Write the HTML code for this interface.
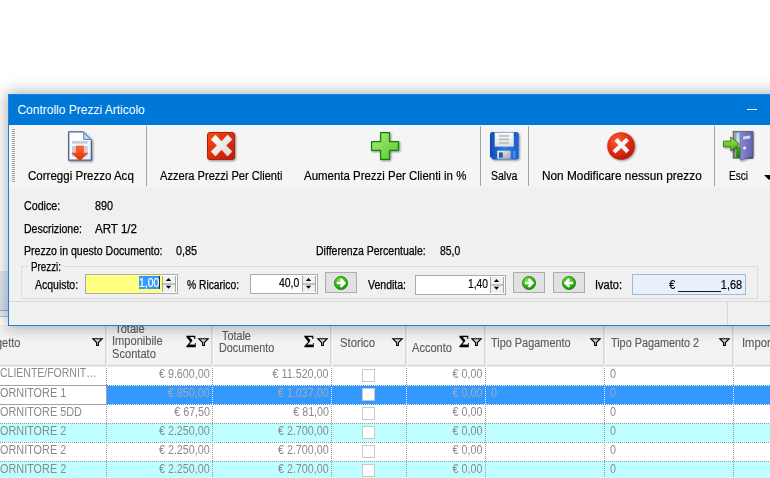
<!DOCTYPE html>
<html><head><meta charset="utf-8"><title>Controllo Prezzi Articolo</title>
<style>
html,body{margin:0;padding:0;}
body{width:770px;height:478px;overflow:hidden;background:#fff;position:relative;font-family:"Liberation Sans",sans-serif;font-size:11px;color:#000;}
.abs,.abs *{position:absolute;white-space:nowrap;}
svg{position:absolute;overflow:visible;}
#bgl1{left:0;top:271px;width:8px;height:39px;background:linear-gradient(#e2e9f5,#d9e3f2);}
#bgl2{left:0;top:310px;width:8px;height:1px;background:#8fb2e4;}
#bgl3{left:0;top:311px;width:8px;height:5px;background:#e9eff8;}
#bgl4{left:0;top:316px;width:8px;height:1px;background:#b9c3d1;}
#grid{left:0;top:325px;width:770px;height:153px;background:#fff;}
.hdr{top:0;left:0;width:770px;height:42px;background:linear-gradient(#f3f3f3 0,#f3f3f3 39px,#ececec 39px,#ececec 40px,#d4d4d4 40px,#d4d4d4 41px,#e6eded 41px,#e6eded 42px);}
.hsep{top:0;width:3px;height:41px;background:linear-gradient(90deg,#dcdcdc 0,#d2d2d2 34%,#fbfbfb 67%,#f6f6f6 100%);}
.ht{color:#5c5c5c;font-size:12px;line-height:12.4px;transform-origin:0 0;-webkit-text-stroke:.15px #5c5c5c;}
.row{left:0;width:770px;height:19px;}
.cell{top:1px;height:14px;line-height:14px;color:#8a8a8a;font-size:12px;transform-origin:0 0;transform:scaleX(.895);}
.cell.rt{transform-origin:100% 0;}
.sel .cell{color:#9daabc;}
.sel .cell.c0{color:#878787;}
.vl{top:42px;width:1px;height:112px;background:repeating-linear-gradient(transparent 0,transparent 1px,#979797 1px,#979797 2px);}
.hl{left:0;width:770px;height:1px;background:repeating-linear-gradient(90deg,#9c9c9c 0,#9c9c9c 1px,transparent 1px,transparent 2px);}
.cb{width:11px;height:11px;border:1px solid #c8c8c8;background:#fff;}
#win{left:8px;top:94px;width:780px;height:232px;background:#f0f0f0;border:1px solid #1a80d9;box-sizing:border-box;box-shadow:0 0 15px 1px rgba(0,0,0,.33);}
#title{left:0;top:0;width:780px;height:30px;background:#0078d7;}
#title span{left:8.4px;top:8px;color:#fff;font-size:12px;line-height:14px;}
#tb{left:0;top:30px;width:780px;height:62px;background:#f5f5f5;}
.tsep{top:1px;width:1px;height:60px;background:#a5a5a5;}
.tl{top:44px;font-size:12px;line-height:14px;transform-origin:0 0;-webkit-text-stroke:.2px #000;}
.lbl{font-size:12px;line-height:14px;transform-origin:0 0;-webkit-text-stroke:.25px #000;}
.num{height:18px;border:1px solid #a9abb1;background:#fff;}
.num span{font-size:12px;line-height:14px;top:1px;-webkit-text-stroke:.2px currentColor;transform-origin:100% 0;transform:scaleX(.91);}
.sp{top:1px;width:14px;height:16px;}
.btn{width:30px;height:19px;border:1px solid #adadad;background:#e1e1e1;}
</style></head><body>
<div class="abs" id="bgl1"></div><div class="abs" id="bgl2"></div><div class="abs" id="bgl3"></div><div class="abs" id="bgl4"></div>
<div class="abs" id="grid">
<div class="hdr"></div>
<div class="hsep" style="left:105px"></div><div class="hsep" style="left:211px"></div><div class="hsep" style="left:330px"></div><div class="hsep" style="left:405px"></div><div class="hsep" style="left:484px"></div><div class="hsep" style="left:603px"></div><div class="hsep" style="left:732px"></div>
<span class="ht" style="left:-4.5px;top:12px;transform:scaleX(.915)">getto</span><svg style="left:92px;top:13px" width="11" height="9" viewBox="0 0 11 9"><path d="M0.8 0.7H10.2L6.4 4.5V7.5H4.6V4.5Z" fill="#d2d2d2" stroke="#000" stroke-width="1.1" stroke-linejoin="miter"/></svg><span class="ht" style="left:112.4px;top:-2px;transform:scaleX(0.9252)">&nbsp;Totale<br>Imponibile<br>Scontato</span><span class="abs" style="left:185.5px;top:8px;font-family:'Liberation Serif',serif;font-weight:bold;font-size:17.5px;line-height:17px;color:#000;transform-origin:0 0;transform:scaleX(.92);-webkit-text-stroke:.3px #000">Σ</span><svg style="left:198px;top:13px" width="11" height="9" viewBox="0 0 11 9"><path d="M0.8 0.7H10.2L6.4 4.5V7.5H4.6V4.5Z" fill="#d2d2d2" stroke="#000" stroke-width="1.1" stroke-linejoin="miter"/></svg><span class="ht" style="left:218.5px;top:5px;transform:scaleX(0.8996)">&nbsp;Totale<br>Documento</span><span class="abs" style="left:303.5px;top:8px;font-family:'Liberation Serif',serif;font-weight:bold;font-size:17.5px;line-height:17px;color:#000;transform-origin:0 0;transform:scaleX(.92);-webkit-text-stroke:.3px #000">Σ</span><svg style="left:317px;top:13px" width="11" height="9" viewBox="0 0 11 9"><path d="M0.8 0.7H10.2L6.4 4.5V7.5H4.6V4.5Z" fill="#d2d2d2" stroke="#000" stroke-width="1.1" stroke-linejoin="miter"/></svg><span class="ht" style="left:340px;top:12px;transform:scaleX(0.9372)">Storico</span><svg style="left:392px;top:13px" width="11" height="9" viewBox="0 0 11 9"><path d="M0.8 0.7H10.2L6.4 4.5V7.5H4.6V4.5Z" fill="#d2d2d2" stroke="#000" stroke-width="1.1" stroke-linejoin="miter"/></svg><span class="ht" style="left:412px;top:17px;transform:scaleX(0.9226)">Acconto</span><span class="abs" style="left:458.5px;top:8px;font-family:'Liberation Serif',serif;font-weight:bold;font-size:17.5px;line-height:17px;color:#000;transform-origin:0 0;transform:scaleX(.92);-webkit-text-stroke:.3px #000">Σ</span><svg style="left:471px;top:13px" width="11" height="9" viewBox="0 0 11 9"><path d="M0.8 0.7H10.2L6.4 4.5V7.5H4.6V4.5Z" fill="#d2d2d2" stroke="#000" stroke-width="1.1" stroke-linejoin="miter"/></svg><span class="ht" style="left:491.4px;top:12px;transform:scaleX(0.9086)">Tipo Pagamento</span><svg style="left:590px;top:13px" width="11" height="9" viewBox="0 0 11 9"><path d="M0.8 0.7H10.2L6.4 4.5V7.5H4.6V4.5Z" fill="#d2d2d2" stroke="#000" stroke-width="1.1" stroke-linejoin="miter"/></svg><span class="ht" style="left:610.5px;top:12px;transform:scaleX(0.9026)">Tipo Pagamento 2</span><svg style="left:719px;top:13px" width="11" height="9" viewBox="0 0 11 9"><path d="M0.8 0.7H10.2L6.4 4.5V7.5H4.6V4.5Z" fill="#d2d2d2" stroke="#000" stroke-width="1.1" stroke-linejoin="miter"/></svg><span class="ht" style="left:742px;top:12px;transform:scaleX(0.9342)">Importo</span>
<div class="row " style="top:41px;background:#fff;clip-path:inset(1px 0 0 0)"><span class="cell c0" style="left:0.3px;top:0;transform:scaleX(0.8738)">CLIENTE/FORNIT…</span><span class="cell rt" style="right:560px">€ 9.600,00</span><span class="cell rt" style="right:441px">€ 11.520,00</span><div class="cb" style="left:362px;top:3px"></div><span class="cell rt" style="right:287.4px">€ 0,00</span><span class="cell" style="left:610px">0</span></div>
<div class="row sel" style="top:60px;background:#fff"><div style="left:107px;top:0;width:663px;height:20px;background:#3399ff"></div><span class="cell c0" style="left:-0.5px;transform:scaleX(0.905)">ORNITORE 1</span><span class="cell rt" style="right:560px">€ 850,00</span><span class="cell rt" style="right:441px">€ 1.037,00</span><div class="cb" style="left:362px;top:3px"></div><span class="cell rt" style="right:287.4px">€ 0,00</span><span class="cell" style="left:491px">0</span><span class="cell" style="left:610px">0</span></div>
<div class="row " style="top:79px;background:#fff"><span class="cell c0" style="left:-0.5px;transform:scaleX(0.905)">ORNITORE 5DD</span><span class="cell rt" style="right:560px">€ 67,50</span><span class="cell rt" style="right:441px">€ 81,00</span><div class="cb" style="left:362px;top:3px"></div><span class="cell rt" style="right:287.4px">€ 0,00</span><span class="cell" style="left:610px">0</span></div>
<div class="row cyan" style="top:98px;background:#c0ffff"><span class="cell c0" style="left:-0.5px;transform:scaleX(0.905)">ORNITORE 2</span><span class="cell rt" style="right:560px">€ 2.250,00</span><span class="cell rt" style="right:441px">€ 2.700,00</span><div class="cb" style="left:362px;top:3px"></div><span class="cell rt" style="right:287.4px">€ 0,00</span><span class="cell" style="left:610px">0</span></div>
<div class="row " style="top:117px;background:#fff"><span class="cell c0" style="left:-0.5px;transform:scaleX(0.905)">ORNITORE 2</span><span class="cell rt" style="right:560px">€ 2.250,00</span><span class="cell rt" style="right:441px">€ 2.700,00</span><div class="cb" style="left:362px;top:3px"></div><span class="cell rt" style="right:287.4px">€ 0,00</span><span class="cell" style="left:610px">0</span></div>
<div class="row cyan" style="top:136px;background:#c0ffff"><span class="cell c0" style="left:-0.5px;transform:scaleX(0.905)">ORNITORE 2</span><span class="cell rt" style="right:560px">€ 2.250,00</span><span class="cell rt" style="right:441px">€ 2.700,00</span><div class="cb" style="left:362px;top:3px"></div><span class="cell rt" style="right:287.4px">€ 0,00</span><span class="cell" style="left:610px">0</span></div>
<div class="hl" style="top:60px"></div><div class="hl" style="top:79px"></div><div class="hl" style="top:98px"></div><div class="hl" style="top:117px"></div><div class="hl" style="top:136px"></div><div class="vl" style="left:106px"></div><div class="vl" style="left:212px"></div><div class="vl" style="left:331px"></div><div class="vl" style="left:406px"></div><div class="vl" style="left:485px"></div><div class="vl" style="left:604px"></div><div class="vl" style="left:733px"></div><div style="left:-1px;top:60px;width:106px;height:18px;border:1px solid #a3a3a3"></div><div style="left:212px;top:61px;width:1px;height:18px;background:repeating-linear-gradient(#3399ff 0,#3399ff 1px,#eef4fc 1px,#eef4fc 2px)"></div><div style="left:331px;top:61px;width:1px;height:18px;background:repeating-linear-gradient(#3399ff 0,#3399ff 1px,#eef4fc 1px,#eef4fc 2px)"></div><div style="left:406px;top:61px;width:1px;height:18px;background:repeating-linear-gradient(#3399ff 0,#3399ff 1px,#eef4fc 1px,#eef4fc 2px)"></div><div style="left:485px;top:61px;width:1px;height:18px;background:repeating-linear-gradient(#3399ff 0,#3399ff 1px,#eef4fc 1px,#eef4fc 2px)"></div><div style="left:604px;top:61px;width:1px;height:18px;background:repeating-linear-gradient(#3399ff 0,#3399ff 1px,#eef4fc 1px,#eef4fc 2px)"></div><div style="left:733px;top:61px;width:1px;height:18px;background:repeating-linear-gradient(#3399ff 0,#3399ff 1px,#eef4fc 1px,#eef4fc 2px)"></div><div style="left:107px;top:60px;width:663px;height:1px;background:repeating-linear-gradient(90deg,#3399ff 0,#3399ff 1px,#f4f8ff 1px,#f4f8ff 2px)"></div><div style="left:107px;top:79px;width:663px;height:1px;background:repeating-linear-gradient(90deg,#3399ff 0,#3399ff 1px,#f4f8ff 1px,#f4f8ff 2px)"></div>
</div>
<div class="abs" id="win">
<div id="title"><span style="letter-spacing:0.001px">Controllo Prezzi Articolo</span><div style="left:738px;top:14px;width:10px;height:1px;background:#fff"></div></div>
<div id="tb"><div style="left:3px;top:4px;width:3px;height:54px;background:repeating-linear-gradient(#a0a0a0 0,#a0a0a0 1px,transparent 1px,transparent 2px)"></div><div class="tsep" style="left:137px"></div><div class="tsep" style="left:471px"></div><div class="tsep" style="left:519px"></div><div class="tsep" style="left:705px"></div>
<span class="tl" style="left:19px;transform:scaleX(0.9614)">Correggi Prezzo Acq</span><span class="tl" style="left:151px;transform:scaleX(0.9231)">Azzera Prezzi Per Clienti</span><span class="tl" style="left:295px;transform:scaleX(0.9544)">Aumenta Prezzi Per Clienti in %</span><span class="tl" style="left:482.2px;transform:scaleX(0.8762)">Salva</span><span class="tl" style="left:533.3px;transform:scaleX(0.9854)">Non Modificare nessun prezzo</span><span class="tl" style="left:720.3px;transform:scaleX(0.8337)">Esci</span><svg style="left:755px;top:50px" width="10" height="6"><path d="M0 0H10L5 5Z" fill="#000"/></svg>
<svg style="left:0;top:0" width="780" height="61" viewBox="9 125 780 61">
<defs>
<linearGradient id="pg" x1="0" y1="0" x2="1" y2="1"><stop offset="0" stop-color="#ffffff"/><stop offset=".6" stop-color="#f6f9fd"/><stop offset="1" stop-color="#e3ebf7"/></linearGradient>
<linearGradient id="ar" x1="0" y1="0" x2="0" y2="1"><stop offset="0" stop-color="#ff6a2a"/><stop offset="1" stop-color="#e02a05"/></linearGradient>
<linearGradient id="rx" x1="0" y1="0" x2="1" y2="1"><stop offset="0" stop-color="#f4501c"/><stop offset=".5" stop-color="#e02c08"/><stop offset="1" stop-color="#b81808"/></linearGradient>
<linearGradient id="wx" x1="0" y1="0" x2="1" y2="1"><stop offset="0" stop-color="#ffffff"/><stop offset="1" stop-color="#d8d8d8"/></linearGradient>
<linearGradient id="gp" x1="0" y1="0" x2="1" y2="1"><stop offset="0" stop-color="#a6ec7a"/><stop offset="1" stop-color="#5cc82c"/></linearGradient>
<linearGradient id="fl" x1="0" y1="0" x2="1" y2="0"><stop offset="0" stop-color="#0c48b8"/><stop offset=".5" stop-color="#2f7fe0"/><stop offset="1" stop-color="#1a5fd0"/></linearGradient>
<linearGradient id="lb" x1="0" y1="0" x2="0" y2="1"><stop offset="0" stop-color="#fafafa"/><stop offset="1" stop-color="#e0e0e4"/></linearGradient>
<linearGradient id="sh" x1="0" y1="0" x2="1" y2="1"><stop offset="0" stop-color="#f4f4f4"/><stop offset="1" stop-color="#a8a8a8"/></linearGradient>
<radialGradient id="rc" cx="38%" cy="32%" r="75%"><stop offset="0" stop-color="#f8603a"/><stop offset=".55" stop-color="#e22e10"/><stop offset="1" stop-color="#b01408"/></radialGradient>
<linearGradient id="dr" x1="0" y1="0" x2="1" y2="0"><stop offset="0" stop-color="#8a8ad0"/><stop offset="1" stop-color="#6464b4"/></linearGradient>
<linearGradient id="sky" x1="0" y1="0" x2="0" y2="1"><stop offset="0" stop-color="#9cccf4"/><stop offset=".55" stop-color="#e8f0d0"/><stop offset=".6" stop-color="#38b010"/><stop offset="1" stop-color="#187800"/></linearGradient>
<linearGradient id="ga" x1="0" y1="0" x2="0" y2="1"><stop offset="0" stop-color="#90e850"/><stop offset="1" stop-color="#48b810"/></linearGradient>
<filter id="ds" x="-20%" y="-20%" width="150%" height="150%"><feGaussianBlur in="SourceAlpha" stdDeviation="0.9"/><feOffset dx="1" dy="1"/><feComponentTransfer><feFuncA type="linear" slope="0.45"/></feComponentTransfer><feMerge><feMergeNode/><feMergeNode in="SourceGraphic"/></feMerge></filter>
</defs>
<!-- page with arrow -->
<g filter="url(#ds)">
<path d="M68.7 131.8H83.5L91.4 139.7V160.1H68.7Z" fill="url(#pg)"/>
<path d="M83.5 131.8H68.7V160.1H91.4V139.7" fill="none" stroke="#4a5e9c" stroke-width="1.3" stroke-linejoin="round"/>
<path d="M83.5 131.8L91.4 139.7" fill="none" stroke="#8e9cc4" stroke-width="1"/>
<path d="M83.7 132.6V139.5H90.8Z" fill="#b9daf4" stroke="#5d74b0" stroke-width=".9" stroke-linejoin="round"/>
</g>
<rect x="72" y="141" width="15.6" height="2.7" fill="#c9cbe6"/>
<rect x="72" y="146" width="3" height="10.5" fill="#c9cbe6"/><rect x="84.7" y="146" width="2.9" height="10.5" fill="#c9cbe6"/>
<path d="M75.9 146H83.8V153H87.8L79.8 161L71.8 153H75.9Z" fill="url(#ar)" stroke="#e8501c" stroke-width=".6"/>
<!-- red square X -->
<g filter="url(#ds)"><rect x="207.5" y="132.5" width="27" height="27" rx="2.5" fill="url(#rx)" stroke="#a8200c" stroke-width="1"/></g>
<path d="M215.5 134.8L221.5 141.3L227.6 134.8L232.2 139.5L226.2 145.5L232.2 151.6L227.6 156.3L221.5 149.8L215.5 156.3L210.9 151.6L216.9 145.5L210.9 139.5Z" fill="url(#wx)" stroke="#f8a080" stroke-width=".5"/>
<!-- green plus -->
<g filter="url(#ds)"><path d="M380.6 132.6H389.5V141.6H398.5V150.4H389.5V159.4H380.6V150.4H371.6V141.6H380.6Z" fill="url(#gp)" stroke="#14820c" stroke-width="1.3" stroke-linejoin="round"/></g>
<!-- floppy -->
<g filter="url(#ds)"><path d="M492.5 132H516.2Q518.7 132 518.7 134.5V157Q518.7 159.5 516.2 159.5H493L490 156.5V134.5Q490 132 492.5 132Z" fill="url(#fl)"/></g>
<rect x="494.9" y="132.7" width="18.8" height="13.8" fill="url(#lb)" stroke="#c8ccd8" stroke-width=".4"/>
<rect x="499" y="135.1" width="10.1" height="1.7" fill="#bdbdbd"/><rect x="499" y="138.6" width="10.1" height="1.7" fill="#bdbdbd"/><rect x="499" y="142.1" width="10.1" height="1.7" fill="#bdbdbd"/>
<rect x="514.2" y="134.4" width="1.3" height="1.3" fill="#0a2a70"/>
<rect x="497.2" y="150.7" width="13.4" height="8" fill="url(#sh)"/>
<rect x="499" y="152.4" width="3.8" height="5.2" fill="#1558c8"/>
<rect x="513.3" y="151" width="2" height="7" fill="#5a9cf0" opacity=".8"/>
<!-- red circle X -->
<g filter="url(#ds)"><circle cx="621" cy="146" r="13.8" fill="url(#rc)"/></g>
<path d="M616 139.5L627.8 151.8M627.6 139.3L614 152" stroke="#f4f4f4" stroke-width="4.2" fill="none"/>
<!-- door -->
<rect x="733.5" y="131.7" width="19.2" height="26.3" fill="url(#sky)" stroke="#6a6a6a" stroke-width="1.6"/>
<rect x="734.6" y="132.5" width="1.6" height="25" fill="#a0a0a0"/>
<g filter="url(#ds)"><path d="M740.2 133.6L752.4 131.9V156.2L740.2 160.3Z" fill="url(#dr)" stroke="#5a5aa8" stroke-width=".6"/></g>
<rect x="743.2" y="136.4" width="7" height="3" fill="#d4d4f4" transform="skewY(-7)" transform-origin="743.2 136.4"/>
<circle cx="744.6" cy="148" r="1.5" fill="#f0f0e8"/>
<g filter="url(#ds)"><path d="M723.5 141.2H730.8V137L738.8 144L730.8 151V146.8H723.5Z" fill="url(#ga)" stroke="#4a7a2a" stroke-width="1" stroke-linejoin="round"/></g>
</svg>
</div>
<span class="lbl" style="left:14.5px;top:104px;transform:scaleX(0.8897)">Codice:</span><span class="lbl" style="left:86px;top:104px;transform:scaleX(0.8991)">890</span><span class="lbl" style="left:15px;top:127px;transform:scaleX(0.8785)">Descrizione:</span><span class="lbl" style="left:86px;top:127px;transform:scaleX(0.9638)">ART 1/2</span><span class="lbl" style="left:15px;top:149px;transform:scaleX(0.8799)">Prezzo in questo Documento:</span><span class="lbl" style="left:167px;top:149px;transform:scaleX(0.8992)">0,85</span><span class="lbl" style="left:306.5px;top:149px;transform:scaleX(0.8764)">Differenza Percentuale:</span><span class="lbl" style="left:430.5px;top:149px;transform:scaleX(0.865)">85,0</span>
<div style="left:12px;top:171px;width:735px;height:31px;border:1px solid #dcdcdc"></div><div style="left:19px;top:169px;width:35px;height:5px;background:#f0f0f0"></div><span class="lbl" style="left:21.5px;top:165px;transform:scaleX(0.818)">Prezzi:</span><span class="lbl" style="left:26.299999999999997px;top:183px;transform:scaleX(0.8732)">Acquisto:</span><span class="lbl" style="left:178px;top:183px;transform:scaleX(0.857)">%&nbsp;Ricarico:</span><span class="lbl" style="left:359px;top:183px;transform:scaleX(0.8762)">Vendita:</span><span class="lbl" style="left:586px;top:183px;transform:scaleX(0.92)">Ivato:</span>
<div class="num" style="left:76px;top:179px;width:91px"><div style="left:0;top:0;width:76px;height:18px;background:#ffff80"></div><div style="left:53.30000000000001px;top:1px;width:20.299999999999983px;height:13px;background:#3399ff"></div><div style="left:72.6px;top:1px;width:1px;height:13px;background:#3a2a10"></div><span style="left:53.30000000000001px;color:#fff;transform-origin:0 0;transform:scaleX(0.8693)">1,00</span><div class="sp" style="left:76px"><div style="left:0;top:0;width:14px;height:16px;background:#f0f0f0;border-left:1px solid #a8a8a8;border-right:1px solid #a8a8a8;box-sizing:border-box"></div><div style="left:1px;top:7px;width:12px;height:2px;background:#c2c2c2"></div><svg style="left:0;top:0" width="14" height="16"><path d="M3.8 5H9.2L6.5 2.1Z M3.8 9.8H9.2L6.5 12.7Z" fill="#000"/></svg></div></div><div class="num" style="left:241px;top:179px;width:66px"><span style="left:28.30000000000001px;transform-origin:0 0;transform:scaleX(0.8693)">40,0</span><div class="sp" style="left:51px"><div style="left:0;top:0;width:14px;height:16px;background:#f0f0f0;border-left:1px solid #a8a8a8;border-right:1px solid #a8a8a8;box-sizing:border-box"></div><div style="left:1px;top:7px;width:12px;height:2px;background:#c2c2c2"></div><svg style="left:0;top:0" width="14" height="16"><path d="M3.8 5H9.2L6.5 2.1Z M3.8 9.8H9.2L6.5 12.7Z" fill="#000"/></svg></div></div><div class="num" style="left:406px;top:180px;width:89px"><span style="left:52.30000000000001px;transform-origin:0 0;transform:scaleX(0.8564)">1,40</span><div class="sp" style="left:74px"><div style="left:0;top:0;width:14px;height:16px;background:#f0f0f0;border-left:1px solid #a8a8a8;border-right:1px solid #a8a8a8;box-sizing:border-box"></div><div style="left:1px;top:7px;width:12px;height:2px;background:#c2c2c2"></div><svg style="left:0;top:0" width="14" height="16"><path d="M3.8 5H9.2L6.5 2.1Z M3.8 9.8H9.2L6.5 12.7Z" fill="#000"/></svg></div></div><div class="num" style="left:623px;top:179px;width:112px;height:19px;background:#e9f0fb;border-color:#9db8de"><span style="right:3px;top:3px">€ _______1,68</span></div>
<div class="btn" style="left:316px;top:177px"><svg style="left:8px;top:3px" width="14" height="14" viewBox="0 0 14 14"><defs><radialGradient id="g325" cx="42%" cy="34%" r="68%"><stop offset="0" stop-color="#86ee48"/><stop offset=".55" stop-color="#38bc14"/><stop offset="1" stop-color="#1c8c0c"/></radialGradient></defs><circle cx="7" cy="7" r="6.6" fill="url(#g325)" stroke="#2c7a20" stroke-width=".8"/><path d="M2.8 7H10.2M6.6 3.1L10.6 7L6.6 10.9" fill="none" stroke="#fff" stroke-width="2.3"/></svg></div><div class="btn" style="left:504px;top:177px"><svg style="left:8px;top:3px" width="14" height="14" viewBox="0 0 14 14"><defs><radialGradient id="g513" cx="42%" cy="34%" r="68%"><stop offset="0" stop-color="#86ee48"/><stop offset=".55" stop-color="#38bc14"/><stop offset="1" stop-color="#1c8c0c"/></radialGradient></defs><circle cx="7" cy="7" r="6.6" fill="url(#g513)" stroke="#2c7a20" stroke-width=".8"/><path d="M2.8 7H10.2M6.6 3.1L10.6 7L6.6 10.9" fill="none" stroke="#fff" stroke-width="2.3"/></svg></div><div class="btn" style="left:544px;top:177px"><svg style="left:8px;top:3px" width="14" height="14" viewBox="0 0 14 14"><defs><radialGradient id="g553" cx="42%" cy="34%" r="68%"><stop offset="0" stop-color="#86ee48"/><stop offset=".55" stop-color="#38bc14"/><stop offset="1" stop-color="#1c8c0c"/></radialGradient></defs><circle cx="7" cy="7" r="6.6" fill="url(#g553)" stroke="#2c7a20" stroke-width=".8"/><path d="M11.2 7H3.8M7.4 3.1L3.4 7L7.4 10.9" fill="none" stroke="#fff" stroke-width="2.3"/></svg></div>
<div style="left:0;top:206px;width:780px;height:1px;background:#d7d7d7"></div><div style="left:718px;top:207px;width:1px;height:23px;background:#d7d7d7"></div></div>
</body></html>
